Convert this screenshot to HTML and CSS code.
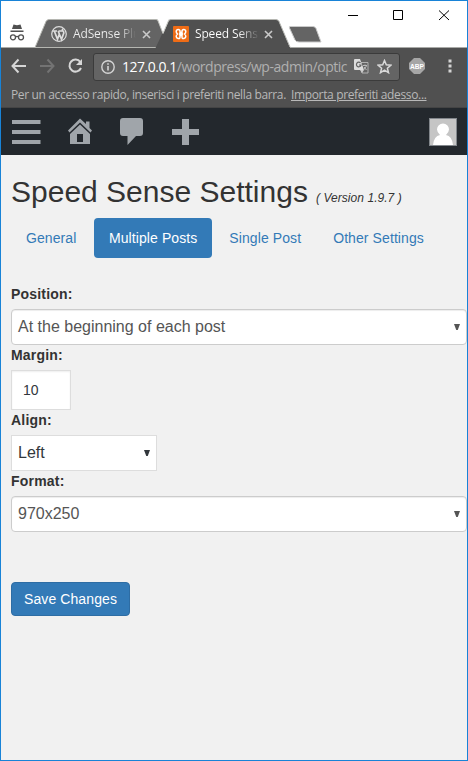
FILE: index.html
```html
<!DOCTYPE html>
<html lang="it">
<head>
<meta charset="utf-8">
<title>Speed Sense Settings</title>
<link rel="stylesheet" href="styles.css">
</head>
<body>
<div class="window">
  <header class="titlebar">
    <svg class="tab-shapes" width="466" height="47" viewBox="1 1 466 47">
      <path d="M1 47.500H467" stroke="#a9aaa7"/>
      <path d="M35 47.500L46 21.500Q47 19.500 49 19.500H156Q158 19.500 159 21.500L170 47.500Z" fill="#646464" stroke="#b5b6b1"/>
      <path d="M155.500 48L168 21.500Q169 19.500 171 19.500H276Q278 19.500 279 21.500L290 47.500V48Z" fill="#505050"/>
      <path d="M163 33L168 21.500Q169 19.500 171 19.500H276Q278 19.500 279 21.500L290 47" fill="none" stroke="#b5b6b1"/>
      <path d="M157.500 19H169L163 33.500Z" fill="#fff"/>
      <path d="M157.500 19.500L163 33.500L169 19.500" fill="none" stroke="#c5c6c1"/>
      <path d="M290 26.500H313Q315 26.500 316 28.500L321 42H299Q296 42 295 40L289.500 28Q289 26.500 290 26.500Z" fill="#646464" stroke="#c9c9c9"/>
    </svg>
    <svg class="incognito" width="18" height="18" viewBox="0 0 18 18"><path d="M4 5L5.500.500 9 1.300 12.500.500 14 5ZM2.500 6.500H15.500V8H2.500Z" fill="#505050"/><g fill="none" stroke="#505050" stroke-width="1.300"><circle cx="5" cy="13.300" r="2.500"/><circle cx="13" cy="13.300" r="2.500"/><path d="M7.500 13Q9 11.800 10.500 13"/></g></svg>
    <div class="tab tab-first">
      <svg width="16" height="16" viewBox="0 0 16 16"><circle cx="8" cy="8" r="7.300" fill="#646464" stroke="#ddd" stroke-width="1.200"/><path d="M2 5H6M7.500 5H12M3.300 5L6.500 13.300 8.300 8 7.200 5M8.300 8L10.500 13.300 12.800 7Q13 5.500 11.500 4.500 11 3 12.500 3" fill="none" stroke="#ddd" stroke-width="1.700"/></svg>
      <span class="tab-title fade-inactive">AdSense Plu</span>
      <svg class="close" width="9" height="9" viewBox="0 0 9 9"><path d="M1 1L8 8M8 1L1 8"/></svg>
    </div>
    <div class="tab tab-active">
      <svg width="16" height="16" viewBox="0 0 16 16"><rect width="16" height="16" rx="1" fill="#ef6c16"/><path d="M7 5.300Q7 3.500 5.200 3.500T3.200 5.500Q3.200 7 4.500 8Q3.200 9 3.200 10.500T5.200 12.500T7 10.700M9 5.300Q9 3.500 10.800 3.500T12.800 5.500Q12.800 7 11.500 8Q12.800 9 12.800 10.500T10.800 12.500T9 10.700M6 8H10M7 5V6.500H9V5M7 11V9.500H9V11" fill="none" stroke="#fff" stroke-width="1.500"/></svg>
      <span class="tab-title fade-active">Speed Sens</span>
      <svg class="close" width="9" height="9" viewBox="0 0 9 9"><path d="M1 1L8 8M8 1L1 8"/></svg>
    </div>
    <svg class="controls" width="102" height="12" viewBox="0 0 102 12"><path d="M0 5.500H10M45.500 .500H54.500V9.500H45.500ZM91 .500L101 10M101 .500L91 10" fill="none" stroke="#000"/></svg>
  </header>

  <div class="toolbar">
    <svg class="nav-icons" width="74" height="18" viewBox="0 0 74 18"><g fill="none" stroke-width="2"><path d="M7.500 2.500L1.500 9L7.500 15.500M1.500 9H15" stroke="#d6d6d6"/><path d="M36.500 2.500L42.500 9L36.500 15.500M29 9H42" stroke="#737373"/><path d="M69.300 5A6 6 0 1 0 70 11" stroke="#d6d6d6"/></g><path d="M71 2V8H65Z" fill="#d6d6d6"/></svg>
    <div class="address">
      <svg width="14" height="14" viewBox="0 0 14 14"><circle cx="7" cy="7" r="6.200" fill="none" stroke="#d4d4d4" stroke-width="1.400"/><path d="M6.200 6H7.800V10.500H6.200ZM6.200 3.300H7.800V4.800H6.200Z" fill="#d4d4d4"/></svg>
      <span class="url"><b>127.0.0.1</b>/wordpress/wp-admin/optic</span>
      <svg class="translate" width="15" height="15" viewBox="0 0 15 15"><path d="M5 3.500H14V14H8Z" fill="#646464" stroke="#b0b0b0"/><path d="M0 1Q0 0 1 0H6L10 11H1Q0 11 0 10Z" fill="#ddd"/><path d="M6.500 4A2.300 2.300 0 1 0 7 6H5" fill="none" stroke="#646464" stroke-width="1.200"/><path d="M9 6.500H13M11 5.500V6.500M12.500 7L9.500 11M10 8L12.500 11" stroke="#bbb" fill="none"/><path d="M6 11H10L8 14Z" fill="#ccc"/></svg>
      <svg class="star" width="15" height="15" viewBox="0 0 15 15"><path d="M7.500 1.500L9.300 5.800 14 6.200 10.400 9.200 11.500 13.700 7.500 11.200 3.500 13.700 4.600 9.200 1 6.200 5.700 5.800Z" fill="none" stroke="#d9d9d9" stroke-width="1.500"/></svg>
    </div>
    <svg class="abp" width="16" height="16" viewBox="0 0 16 16"><path d="M5 0H11L16 5V11L11 16H5L0 11V5Z" fill="#a6a6a6"/><text x="8" y="11" text-anchor="middle" textLength="14" lengthAdjust="spacingAndGlyphs" class="abp-text">ABP</text></svg>
    <svg class="more" width="4" height="14" viewBox="0 0 4 14"><path d="M.500 .500H3.500V3.500H.500ZM.500 5.500H3.500V8.500H.500ZM.500 10.500H3.500V13.500H.500Z" fill="#d4d4d4"/></svg>
  </div>
  <div class="bookmarks"><span class="bookmark-hint">Per un accesso rapido, inserisci i preferiti nella barra.</span><a class="bookmark-link">Importa preferiti adesso...</a></div>

  <nav class="adminbar">
    <svg width="190" height="28" viewBox="0 0 190 28" fill="#a0a5aa"><path d="M0 2H28.500V6H0ZM0 12H28.500V16H0ZM0 22H28.500V26H0Z"/><path d="M68 .500L74 6V3.500H77.500V10L80 12.500L78.500 14.500L68 4.500L57.500 14.500L56 12.500Z"/><path fill-rule="evenodd" d="M68 6.500L78 16V26H58V16ZM65 16V24H71V16Z"/><path d="M111 0H128Q131 0 131 3V15Q131 18 128 18H124L115.500 27V18H111Q108 18 108 15V3Q108 0 111 0Z"/><path d="M170 1H177V11H187V17H177V27H170V17H160V11H170Z"/></svg>
    <svg class="avatar" width="28" height="28" viewBox="0 0 28 28"><rect x=".500" y=".500" width="27" height="27" fill="#c5c5c5" stroke="#82878c"/><path d="M4 27Q5 18 11 17Q8 14 8 11.500A6 6 0 0 1 20 11.500Q20 14 17 17Q23 18 24 27Z" fill="#fff"/></svg>
  </nav>

  <main class="content">
    <h2 class="heading"><span class="heading-name">Speed Sense Settings</span><span class="version">( Version 1.9.7 )</span></h2>
    <ul class="pills">
      <li class="pill">General</li>
      <li class="pill active">Multiple Posts</li>
      <li class="pill">Single Post</li>
      <li class="pill">Other Settings</li>
    </ul>
    <form class="form">
      <div class="label">Position:</div>
      <div class="select full"><span>At the beginning of each post</span><i class="arrow"></i></div>
      <div class="label">Margin:</div>
      <div class="number">10</div>
      <div class="label">Align:</div>
      <div class="select small"><span>Left</span><i class="arrow"></i></div>
      <div class="label">Format:</div>
      <div class="select full"><span>970x250</span><i class="arrow"></i></div>
      <button class="save" type="button">Save Changes</button>
    </form>
  </main>
</div>
</body>
</html>
```
FILE: styles.css
```css
* { box-sizing: border-box; }
body { margin: 0; font-family: "Liberation Sans", Arial, sans-serif; font-size: 14px; color: #333; }
svg { display: block; flex: none; }
.window { width: 468px; height: 761px; border: 1px solid #1883d7; background: #f1f1f1; overflow: hidden; }

.titlebar { position: relative; height: 47px; background: #fff; display: flex; align-items: flex-start; }
.tab-shapes { position: absolute; left: 0; top: 0; }
.incognito { margin: 23px 0 0 7px; position: relative; }
.tab { position: relative; display: flex; align-items: center; height: 16px; margin-top: 25px; }
.tab-first { margin-left: 25px; width: 122px; }
.tab-active { width: 102px; }
.tab-title { font-family: "Open Sans", sans-serif; font-size: 12px; line-height: 16px; letter-spacing: -0.15px; width: 64px; margin-left: 6px; white-space: nowrap; color: transparent; background-clip: text; -webkit-background-clip: text; }
.fade-inactive { background-image: linear-gradient(90deg, #eee 73%, #646464 98%); }
.fade-active { background-image: linear-gradient(90deg, #fff 68%, #606060 98%); }
.close { margin-left: 5px; }
.close path { stroke: #c9c9c9; stroke-width: 1.6; fill: none; }
.controls { margin: 9px 0 0 73px; position: relative; }

.toolbar { height: 34px; background: #505050; display: flex; align-items: center; padding-left: 10px; }
.nav-icons { margin-top: 2px; }
.address { width: 307px; height: 28px; margin: 3px 0 0 8px; padding-left: 7px; border: 1px solid #3b3b3b; border-radius: 3px; background: #646464; display: flex; align-items: center; }
.url { font-family: "Open Sans", sans-serif; font-size: 14px; line-height: 20px; letter-spacing: -0.47px; width: 227px; margin-left: 7px; white-space: nowrap; color: #b0b0b0; }
.url b { font-weight: 400; color: #fff; }
.translate { margin-left: 5px; }
.star { margin-left: 8px; }
.abp { margin: 2px 0 0 9px; }
.abp-text { font: bold 8px "Liberation Sans", sans-serif; fill: #fff; }
.more { margin: 2px 0 0 23px; }
.bookmarks { height: 26px; background: #505050; padding-left: 10px; display: flex; align-items: center; font-family: "Open Sans", sans-serif; font-size: 12px; color: #b8b8b8; white-space: nowrap; border-bottom: 1px solid #444; }
.bookmark-hint { width: 280px; letter-spacing: -0.36px; }
.bookmark-link { text-decoration: underline; letter-spacing: -0.35px; }

.adminbar { height: 47px; background: #23282d; display: flex; align-items: flex-start; justify-content: space-between; padding: 10px 10px 0 11px; }
.content { padding-left: 10px; }
.heading { margin: 20px 0 0; height: 43px; line-height: 33px; font-weight: 400; font-size: 30px; display: flex; align-items: baseline; white-space: nowrap; }
.heading-name { width: 305px; }
.version { font-size: 12px; font-style: italic; letter-spacing: 0.05px; }
.pills { display: flex; gap: 2px; margin: 0; padding: 0; list-style: none; letter-spacing: 0.09px; }
.pill { padding: 10px 15px; line-height: 20px; color: #337ab7; border-radius: 4px; white-space: nowrap; }
.pill:first-child { padding-right: 15.5px; }
.active { color: #fff; background: #337ab7; }
.form { padding-top: 26px; }
.label { font-weight: 700; line-height: 20px; height: 25px; letter-spacing: 0.2px; }
.select { height: 36px; display: flex; align-items: center; justify-content: space-between; background: #fff; border: 1px solid #ddd; padding: 0 6px; font-size: 16px; }
.full { width: 456px; border-color: #ccc; border-radius: 4px; color: #555; box-shadow: inset 0 1px 1px rgba(0,0,0,.075); }
.small { width: 146px; color: #32373c; }
.arrow { width: 6px; height: 6px; background: currentColor; clip-path: polygon(0 0, 100% 0, 62% 100%, 38% 100%); }
.number { width: 60px; height: 40px; padding-left: 11px; background: #fff; border: 1px solid #ddd; line-height: 38px; color: #32373c; box-shadow: inset 0 1px 2px rgba(0,0,0,.07); }
.save { display: block; width: 119px; height: 34px; margin-top: 50px; padding: 0; border: 1px solid #2e6da4; border-radius: 4px; background: #337ab7; color: #fff; font: 14px "Liberation Sans", Arial, sans-serif; letter-spacing: 0.1px; }
```
